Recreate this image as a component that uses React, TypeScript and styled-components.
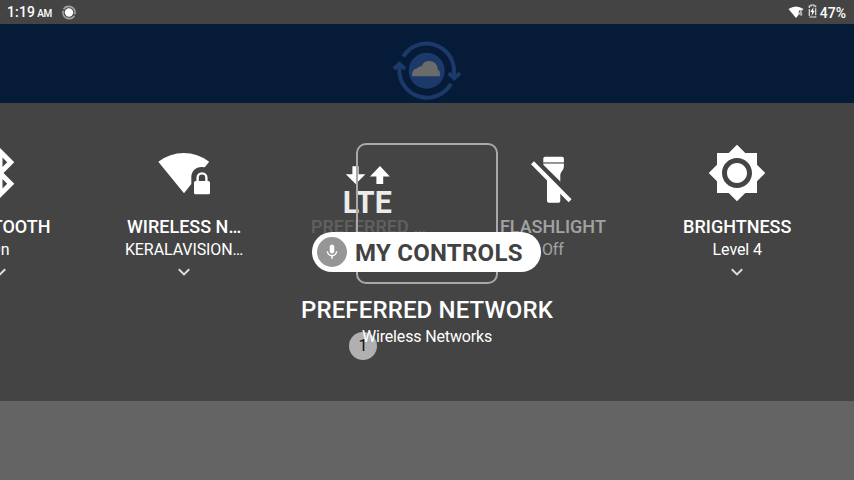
import React from "react";
import styled, { createGlobalStyle } from "styled-components";

const GlobalStyle = createGlobalStyle`
  * { box-sizing: border-box; }
  body { margin: 0; overflow: hidden; background: #646464; }
`;

const Screen = styled.div`
  width: 854px;
  height: 480px;
  display: flex;
  flex-direction: column;
  overflow: hidden;
  background: #646464;
  color: #fff;
  font-family: Roboto, "Liberation Sans", sans-serif;
`;

const StatusBar = styled.header`
  height: 24px;
  flex: none;
  display: flex;
  align-items: center;
  justify-content: space-between;
  padding: 1px 8px 0 7px;
  background: #444;
  font-size: 14px;
  font-weight: 500;
  line-height: 24px;
`;

const StatusGroup = styled.div`
  display: flex;
  align-items: center;
`;

const Clock = styled.span`
  letter-spacing: 0.15px;
  small { font-size: 10px; margin-left: 2px; letter-spacing: -0.2px; }
`;

const SyncIcon = styled.svg`margin-left: 9px;`;
const BatteryIcon = styled.svg`margin: 0 3px 3px 4px;`;
const SignalIcon = styled.svg`margin-bottom: 2px;`;

const Banner = styled.div`
  height: 79px;
  flex: none;
  display: flex;
  justify-content: center;
  align-items: flex-end;
  background: #061b38;
`;

const Panel = styled.main`
  position: relative;
  height: 298px;
  flex: none;
  padding-top: 40px;
  background: #444;
  overflow: hidden;
`;

const TileRow = styled.div`
  display: flex;
  width: 922px;
  height: 141px;
  margin-left: -92.5px;
`;

const Tile = styled.section`
  width: 184.4px;
  flex: none;
  display: flex;
  flex-direction: column;
  align-items: center;
  white-space: nowrap;
`;

const TileTitle = styled.div<{ $opacity: number }>`
  margin-top: 13px;
  height: 22px;
  line-height: 22px;
  font-size: 18px;
  font-weight: 500;
  opacity: ${(p) => p.$opacity};
`;

const TileValue = styled.div<{ $opacity: number }>`
  height: 24px;
  line-height: 23px;
  font-size: 16px;
  letter-spacing: -0.09px;
  opacity: ${(p) => p.$opacity};
`;

const Chevron = styled.svg`margin-top: 4px;`;

const Heading = styled.h1`
  margin: 12px 0 0;
  height: 28px;
  line-height: 28px;
  font-size: 24px;
  font-weight: 500;
  letter-spacing: 0.14px;
  text-align: center;
`;

const Subheading = styled.p`
  margin: 2px 0 0;
  height: 22px;
  line-height: 22px;
  font-size: 16px;
  letter-spacing: -0.15px;
  text-align: center;
`;

const FocusFrame = styled.div`
  position: absolute;
  left: 356px;
  top: 40px;
  width: 142px;
  height: 141px;
  border: 2px solid #a9a9a9;
  border-radius: 10px;
`;

const VoiceLabel = styled.div`
  position: absolute;
  left: 312px;
  top: 129px;
  width: 229px;
  height: 40px;
  display: flex;
  align-items: center;
  padding: 1px 0 0 5px;
  gap: 8px;
  border-radius: 20px;
  background: #fff;
  color: #424242;
  font-size: 24px;
  font-weight: 700;
  letter-spacing: 0.25px;
  white-space: nowrap;
`;

const MicDisc = styled.span`
  width: 30px;
  height: 30px;
  margin-top: -1px;
  flex: none;
  display: flex;
  align-items: center;
  justify-content: center;
  border-radius: 50%;
  background: #969696;
`;

const NumberBadge = styled.div`
  position: absolute;
  left: 349px;
  top: 229px;
  width: 28px;
  height: 28px;
  border-radius: 50%;
  background: rgba(255, 255, 255, 0.58);
  color: #111;
  font-size: 16px;
  line-height: 27px;
  text-align: center;
`;

const Bluetooth = () => (
  <svg width="60" height="60" viewBox="0 0 24 24" fill="#fff">
    <path d="M17.71 7.71L12 2h-1v7.59L6.41 5 5 6.41 10.59 12 5 17.59 6.41 19 11 14.41V22h1l5.71-5.71-4.3-4.29 4.3-4.29zM13 5.83l1.88 1.88L13 9.59V5.83zm1.88 10.46L13 18.17v-3.76l1.88 1.88z" />
  </svg>
);

const WifiLock = () => (
  <svg width="60" height="60" viewBox="0 0 60 60" fill="#fff">
    <path d="M4.3 18.7Q16 10 29.8 10T55.2 18.7L50.8 24.3Q49.5 24 47.5 24C41.5 24 37.3 28.5 37.3 34.5V41L30 50.2Z" />
    <path d="M43.6 39v-4.2a4.4 4.4 0 0 1 8.8 0V39" fill="none" stroke="#fff" strokeWidth="2.4" />
    <rect x="40" y="38" width="16" height="13.3" rx="1.6" />
  </svg>
);

const Lte = () => (
  <svg width="60" height="60" viewBox="0 0 60 60" fill="#fff" overflow="visible">
    <path d="M14.4 23.3h6.2v8h6.8L17.7 41 7.8 31.3h6.6ZM42 23l9.8 10.4h-6.6V41h-6.8v-7.6H32Z" />
    <text x="4.8" y="70.2" fontSize="30.5" fontWeight="700" fill="#ebebeb" textLength="49" lengthAdjust="spacingAndGlyphs">LTE</text>
  </svg>
);

const FlashlightOff = () => (
  <svg width="60" height="60" viewBox="0 0 60 60" fill="#fff">
    <path d="M20.3 15.5q0-1.8 1.8-1.8h17q1.8 0 1.8 1.8v3.7H20.3Z" />
    <path d="M20.3 19.2h20.6V21H20.3Z" fill="#999" />
    <path d="M20.3 21h20.6v2.5q0 2-1.7 4.2Q37.3 30 37.3 32v6.4L20.3 21.8Z" />
    <path d="M24 32.5l13.3 13.3v12.1q0 1.8-1.8 1.8h-9.7q-1.8 0-1.8-1.8Z" />
    <path d="M9.5 19.7L47.1 57.7" stroke="#fff" strokeWidth="4.2" />
  </svg>
);

const Brightness = () => (
  <svg width="60" height="60" viewBox="0 0 24 24" fill="#fff">
    <path d="M20 8.69V4h-4.69L12 .69 8.69 4H4v4.69L.69 12 4 15.31V20h4.69L12 23.31 15.31 20H20v-4.69L23.31 12 20 8.69zM12 18c-3.31 0-6-2.69-6-6s2.69-6 6-6 6 2.69 6 6-2.69 6-6 6zm0-10c-2.21 0-4 1.79-4 4s1.79 4 4 4 4-1.79 4-4-1.79-4-4-4z" />
  </svg>
);

const CloudSyncLogo = () => (
  <svg width="94" height="73" viewBox="0 0 282 219">
    <g fill="none" stroke="#1b3a69" strokeWidth="12">
      <path d="M70 80A82 82 0 0 1 222 122V146" />
      <path d="M206 129L223 145L240 129" />
      <path d="M213 161A83 83 0 0 1 58 115V102" />
      <path d="M42 117L58.5 101L75 117" />
    </g>
    <circle cx="140" cy="122" r="54" fill="#1b3a69" />
    <path d="M99 139Q96 139 96 134Q97 117 112 115Q117 108 125 109Q130 93 149 93Q172 95 173 118Q180 122 180 131V139Z" fill="#6b6b6b" />
  </svg>
);

const tiles = [
  { title: "BLUETOOTH", value: "On", icon: <Bluetooth />, titleOpacity: 1, valueOpacity: 1, chevron: true },
  { title: "WIRELESS N…", value: "KERALAVISION…", icon: <WifiLock />, titleOpacity: 1, valueOpacity: 1, chevron: true },
  { title: "PREFERRED …", value: "Wireless Netw…", icon: <Lte />, titleOpacity: 0.15, valueOpacity: 0.1, chevron: false },
  { title: "FLASHLIGHT", value: "Off", icon: <FlashlightOff />, titleOpacity: 0.5, valueOpacity: 0.5, chevron: false },
  { title: "BRIGHTNESS", value: "Level 4", icon: <Brightness />, titleOpacity: 1, valueOpacity: 1, chevron: true },
];

export default function App() {
  return (
    <Screen>
      <GlobalStyle />
      <StatusBar>
        <StatusGroup>
          <Clock>1:19<small>AM</small></Clock>
          <SyncIcon width="16" height="16" viewBox="0 0 16 16">
            <circle cx="8" cy="7.5" r="4.2" fill="#fff" />
            <path d="M2.6 4.2A6.2 6.2 0 0 1 14 7.5M13.4 10.8A6.2 6.2 0 0 1 2 7.5" fill="none" stroke="#a0a0a0" strokeWidth="1.7" />
            <path d="M12.2 7.5h3.3l-1.6 2.5ZM.5 7.5h3.3L2 5Z" fill="#a0a0a0" />
          </SyncIcon>
        </StatusGroup>
        <StatusGroup>
          <SignalIcon width="16" height="14" viewBox="0 0 16 14">
            <path d="M.5 4Q8 -1.2 15.5 4L8 13Z" fill="#fff" />
            <path d="M10.8 5.5h4.7v7h-4.7Z" fill="#444" />
            <path d="M13.2 11V5.5L11 9.2h3.4" fill="none" stroke="#bbb" strokeWidth="1.2" />
          </SignalIcon>
          <BatteryIcon width="9" height="14" viewBox="0 0 9 14">
            <path d="M3 1h3v1h1.7v11H1.3V2H3Z" fill="none" stroke="#e4e4e4" strokeWidth="1.2" strokeDasharray="7 1" />
            <path d="M5.6 3L2.3 8H4.2L3.5 12 6.8 6.8H5Z" fill="#fff" />
          </BatteryIcon>
          <span>47%</span>
        </StatusGroup>
      </StatusBar>
      <Banner><CloudSyncLogo /></Banner>
      <Panel>
        <TileRow>
          {tiles.map((tile) => (
            <Tile key={tile.title}>
              {tile.icon}
              <TileTitle $opacity={tile.titleOpacity}>{tile.title}</TileTitle>
              <TileValue $opacity={tile.valueOpacity}>{tile.value}</TileValue>
              {tile.chevron && (
                <Chevron width="16" height="12" viewBox="0 0 16 12">
                  <path d="M2.8 3.2L8 8.4L13.2 3.2" fill="none" stroke="#ddd" strokeWidth="2" />
                </Chevron>
              )}
            </Tile>
          ))}
        </TileRow>
        <Heading>PREFERRED NETWORK</Heading>
        <Subheading>Wireless Networks</Subheading>
        <FocusFrame />
        <VoiceLabel>
          <MicDisc>
            <svg width="18" height="18" viewBox="0 0 24 24" fill="#fff">
              <path d="M12 14c1.66 0 2.99-1.34 2.99-3L15 5c0-1.66-1.34-3-3-3S9 3.34 9 5v6c0 1.66 1.34 3 3 3zm5.3-3c0 3-2.54 5.1-5.3 5.1S6.7 14 6.7 11H5c0 3.41 2.72 6.23 6 6.72V21h2v-3.28c3.28-.48 6-3.3 6-6.72h-1.7z" />
            </svg>
          </MicDisc>
          MY CONTROLS
        </VoiceLabel>
        <NumberBadge>1</NumberBadge>
      </Panel>
    </Screen>
  );
}
